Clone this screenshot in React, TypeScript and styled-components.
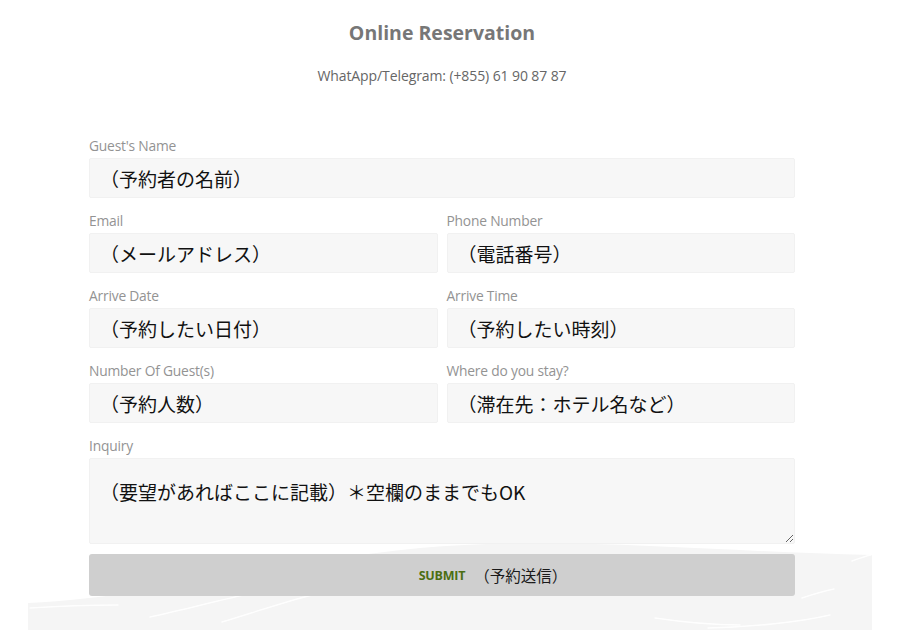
import styled, { createGlobalStyle } from 'styled-components';

const GlobalStyle = createGlobalStyle`
	html, body {
		margin: 0;
		padding: 0;
		background: #ffffff;
	}
	body {
		font-family: 'Open Sans', 'Noto Sans CJK JP', sans-serif;
		overflow: hidden;
	}
`;

const Page = styled.div`
	position: relative;
	width: 884px;
	height: 630px;
	padding-top: 20px;
	box-sizing: border-box;
`;

const Wave = styled.svg`
	position: absolute;
	left: 0;
	top: 0;
	width: 900px;
	height: 630px;
	z-index: 0;
`;

const Content = styled.div`
	position: relative;
	z-index: 1;
	width: 706px;
	margin: 0 auto;
`;

const Title = styled.h2`
	margin: 0;
	font-size: 19.5px;
	line-height: 26px;
	font-weight: 700;
	color: #777;
	text-align: center;
`;

const Contact = styled.p`
	margin: 20px 0 50px;
	font-size: 14px;
	line-height: 20px;
	color: #666;
	text-align: center;
	letter-spacing: -0.1px;
`;

const Grid = styled.form`
	display: grid;
	grid-template-columns: 1fr 1fr;
	column-gap: 9px;
	row-gap: 13px;
`;

const Field = styled.div<{ $wide?: boolean }>`
	display: flex;
	flex-direction: column;
	grid-column: ${(p) => (p.$wide ? '1 / -1' : 'auto')};
`;

const Label = styled.label`
	font-size: 13.8px;
	line-height: 20px;
	color: #939393;
	margin-bottom: 2px;
	letter-spacing: -0.2px;
`;

const Input = styled.input`
	height: 40px;
	box-sizing: border-box;
	padding: 0 10px;
	border: 1px solid #f1f1f1;
	border-radius: 2px;
	background: #f7f7f7;
	font-family: 'Noto Sans CJK JP', sans-serif;
	font-size: 19px;
	font-weight: 400;
	color: #111;
	outline: none;
	&::placeholder {
		color: #111;
		opacity: 1;
	}
`;

const TextArea = styled.textarea`
	height: 86px;
	box-sizing: border-box;
	padding: 20px 10px 0;
	border: 1px solid #f1f1f1;
	border-radius: 2px;
	background: #f7f7f7;
	font-family: 'Noto Sans CJK JP', sans-serif;
	font-size: 19px;
	font-weight: 400;
	line-height: 26px;
	color: #111;
	outline: none;
	resize: vertical;
	&::placeholder {
		color: #111;
		opacity: 1;
	}
`;

const Submit = styled.button`
	grid-column: 1 / -1;
	margin-top: -3px;
	height: 42px;
	border: none;
	border-radius: 3px;
	background: #cfcfcf;
	display: flex;
	align-items: center;
	justify-content: center;
	cursor: pointer;
`;

const SubmitText = styled.span`
	position: relative;
	font-family: 'Open Sans', sans-serif;
	font-size: 12.5px;
	font-weight: 700;
	color: #4b6e12;
	letter-spacing: -0.2px;
`;

const SubmitNote = styled.span`
	position: absolute;
	left: 100%;
	top: 50%;
	transform: translateY(-50%);
	margin-left: 9px;
	white-space: nowrap;
	font-family: 'Noto Sans CJK JP', sans-serif;
	font-size: 15.5px;
	font-weight: 400;
	color: #1a1a1a;
	letter-spacing: 0;
`;

const fields = [
	{ label: "Guest's Name", value: '（予約者の名前）', wide: true },
	{ label: 'Email', value: '（メールアドレス）' },
	{ label: 'Phone Number', value: '（電話番号）' },
	{ label: 'Arrive Date', value: '（予約したい日付）' },
	{ label: 'Arrive Time', value: '（予約したい時刻）' },
	{ label: 'Number Of Guest(s)', value: '（予約人数）' },
	{ label: 'Where do you stay?', value: '（滞在先：ホテル名など）' },
];

function BrushWave() {
	return (
		<Wave viewBox='0 0 900 630' aria-hidden='true'>
			<path
				d='M28 603 C150 598 250 565 420 548 C560 535 720 552 872 555 L872 630 L28 630 Z'
				fill='#f5f5f5'
			/>
			<g stroke='#ffffff' strokeWidth='1.5' fill='none' strokeLinecap='round' opacity='0.9'>
				<path d='M30 608 C60 606 95 605 118 605' />
				<path d='M150 617 C190 608 228 598 262 591' />
				<path d='M222 622 C258 611 288 601 312 595' />
				<path d='M655 618 C682 622 710 625 740 625' />
				<path d='M708 628 C752 627 800 622 830 615' />
				<path d='M802 598 C814 594 824 591 834 589' />
				<path d='M852 561 C860 558 866 556 871 555' />
			</g>
		</Wave>
	);
}

function App() {
	return (
		<Page>
			<GlobalStyle />
			<BrushWave />
			<Content>
				<Title>Online Reservation</Title>
				<Contact>WhatApp/Telegram: (+855) 61 90 87 87</Contact>
				<Grid onSubmit={(e) => e.preventDefault()}>
					{fields.map((f) => (
						<Field key={f.label} $wide={f.wide}>
							<Label>{f.label}</Label>
							<Input placeholder={f.value} />
						</Field>
					))}
					<Field $wide>
						<Label>Inquiry</Label>
						<TextArea placeholder='（要望があればここに記載）＊空欄のままでもOK' />
					</Field>
					<Submit type='submit'>
						<SubmitText>
							SUBMIT
							<SubmitNote>（予約送信）</SubmitNote>
						</SubmitText>
					</Submit>
				</Grid>
			</Content>
		</Page>
	);
}

export default App;
